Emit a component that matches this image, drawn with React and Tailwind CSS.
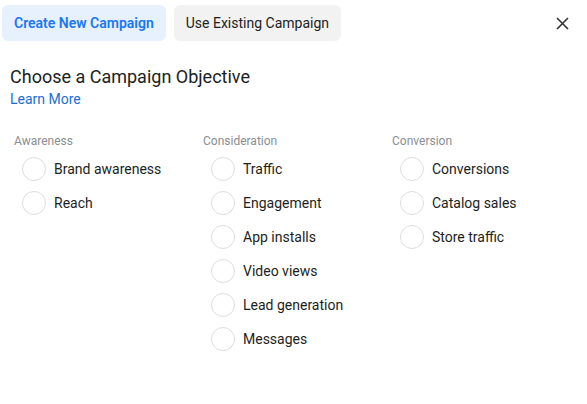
import { useState } from "react";

const columns = [
    { title: "Awareness", items: ["Brand awareness", "Reach"] },
    { title: "Consideration", items: ["Traffic", "Engagement", "App installs", "Video views", "Lead generation", "Messages"] },
    { title: "Conversion", items: ["Conversions", "Catalog sales", "Store traffic"] },
];

export default function App() {
    const [tab, setTab] = useState("new");
    const [selected, setSelected] = useState("");

    return (
        <div className="w-[587px] h-[404px] bg-white text-[#1c1e21] font-['Roboto',sans-serif]">
            <div className="flex items-center pt-[5px] pl-[2px] pr-[15px]">
                <button
                    onClick={() => setTab("new")}
                    className={"h-[36px] px-[12px] rounded-[6px] text-[14px] " + (tab === "new" ? "bg-[#e7f0fd] text-[#1877f2] font-semibold" : "bg-[#f2f2f2] text-[#1c1e21]")}
                >
                    Create New Campaign
                </button>
                <button
                    onClick={() => setTab("existing")}
                    className={"ml-[8px] h-[36px] px-[12px] rounded-[6px] text-[14px] " + (tab === "existing" ? "bg-[#e7f0fd] text-[#1877f2] font-semibold" : "bg-[#f2f2f2] text-[#1c1e21]")}
                >
                    Use Existing Campaign
                </button>
                <button className="ml-auto w-[20px] h-[20px] flex items-center justify-center text-[#333]">
                    <svg width="13" height="13" viewBox="0 0 13 13">
                        <path d="M1 1L12 12M12 1L1 12" stroke="currentColor" strokeWidth="1.6" />
                    </svg>
                </button>
            </div>

            <div className="pl-[10px] mt-[25px]">
                <h2 className="text-[18px] leading-[22px]">Choose a Campaign Objective</h2>
                <a href="#" className="block text-[14px] leading-[18px] mt-[2px] text-[#1a6ed8]">Learn More</a>
            </div>

            <div className="flex pl-[14px] mt-[25px]">
                {columns.map((col) => (
                    <div key={col.title} className="w-[189px]">
                        <div className="text-[12px] leading-[16px] text-[#8a8d91]">{col.title}</div>
                        <div className="mt-[3px]">
                            {col.items.map((item) => (
                                <label key={item} className="flex items-center h-[34px] pl-[8px] cursor-pointer" onClick={() => setSelected(item)}>
                                    <span className={"w-[24px] h-[24px] rounded-full border " + (selected === item ? "border-[7px] border-[#1877f2]" : "border-[#dadde1]")}></span>
                                    <span className="ml-[8px] text-[14px]">{item}</span>
                                </label>
                            ))}
                        </div>
                    </div>
                ))}
            </div>
        </div>
    );
}
